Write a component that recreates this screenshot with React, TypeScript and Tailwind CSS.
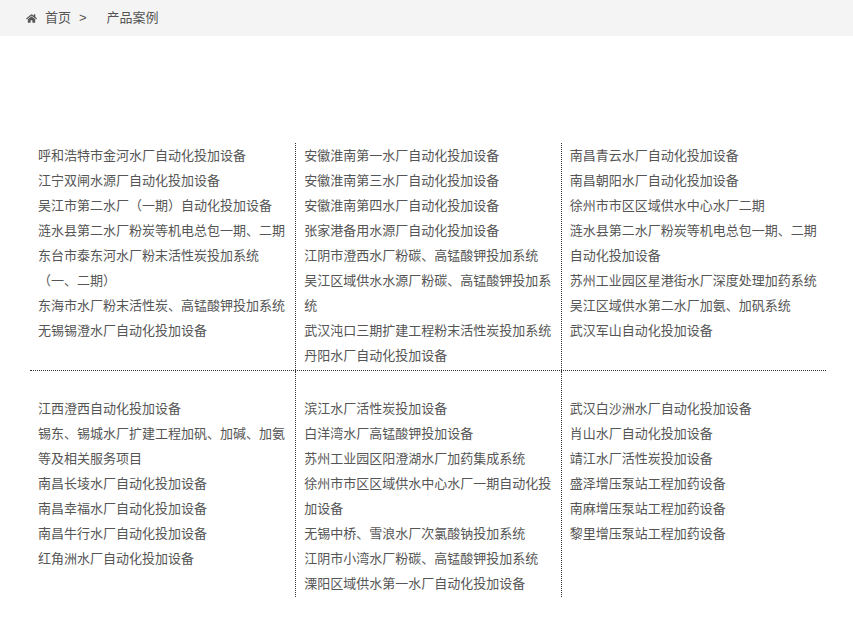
import { FaHome } from "react-icons/fa";

const rows: string[][][] = [
  [
    ["呼和浩特市金河水厂自动化投加设备", "江宁双闸水源厂自动化投加设备", "吴江市第二水厂（一期）自动化投加设备", "涟水县第二水厂粉炭等机电总包一期、二期", "东台市泰东河水厂粉末活性炭投加系统（一、二期）", "东海市水厂粉末活性炭、高锰酸钾投加系统", "无锡锡澄水厂自动化投加设备"],
    ["安徽淮南第一水厂自动化投加设备", "安徽淮南第三水厂自动化投加设备", "安徽淮南第四水厂自动化投加设备", "张家港备用水源厂自动化投加设备", "江阴市澄西水厂粉碳、高锰酸钾投加系统", "吴江区域供水水源厂粉碳、高锰酸钾投加系统", "武汉沌口三期扩建工程粉末活性炭投加系统", "丹阳水厂自动化投加设备"],
    ["南昌青云水厂自动化投加设备", "南昌朝阳水厂自动化投加设备", "徐州市市区区域供水中心水厂二期", "涟水县第二水厂粉炭等机电总包一期、二期自动化投加设备", "苏州工业园区星港街水厂深度处理加药系统", "吴江区域供水第二水厂加氨、加矾系统", "武汉军山自动化投加设备"],
  ],
  [
    ["江西澄西自动化投加设备", "锡东、锡城水厂扩建工程加矾、加碱、加氨等及相关服务项目", "南昌长堎水厂自动化投加设备", "南昌幸福水厂自动化投加设备", "南昌牛行水厂自动化投加设备", "红角洲水厂自动化投加设备"],
    ["滨江水厂活性炭投加设备", "白洋湾水厂高锰酸钾投加设备", "苏州工业园区阳澄湖水厂加药集成系统", "徐州市市区区域供水中心水厂一期自动化投加设备", "无锡中桥、雪浪水厂次氯酸钠投加系统", "江阴市小湾水厂粉碳、高锰酸钾投加系统", "溧阳区域供水第一水厂自动化投加设备"],
    ["武汉白沙洲水厂自动化投加设备", "肖山水厂自动化投加设备", "靖江水厂活性炭投加设备", "盛泽增压泵站工程加药设备", "南麻增压泵站工程加药设备", "黎里增压泵站工程加药设备"],
  ],
];

export default function App() {
  return (
    <div className="min-h-[620px] bg-white text-[#555] text-[13px]" style={{ fontFamily: '"Liberation Sans", "Noto Sans CJK SC", sans-serif' }}>
      <div className="h-9 bg-[#f4f4f4] flex items-center pl-[26px] gap-[8px]">
        <FaHome className="text-[#555] text-[11px]" />
        <span>首页</span>
        <span>&gt;</span>
        <span className="ml-3">产品案例</span>
      </div>
      <div className="mx-[30px] mt-[107px] w-[796px]">
        {rows.map((row, ri) => (
          <div key={ri} className={`grid grid-cols-3 ${ri === 0 ? "border-b border-dotted border-[#333]" : ""}`}>
            {row.map((col, ci) => (
              <div key={ci} className={`px-[8px] leading-[25px] ${ci > 0 ? "border-l border-dotted border-[#333]" : ""} ${ri === 0 ? "pb-[2px]" : "pt-[25px] pb-px"}`}>
                {col.map((t, i) => (
                  <p key={i}>{t}</p>
                ))}
              </div>
            ))}
          </div>
        ))}
      </div>
    </div>
  );
}
